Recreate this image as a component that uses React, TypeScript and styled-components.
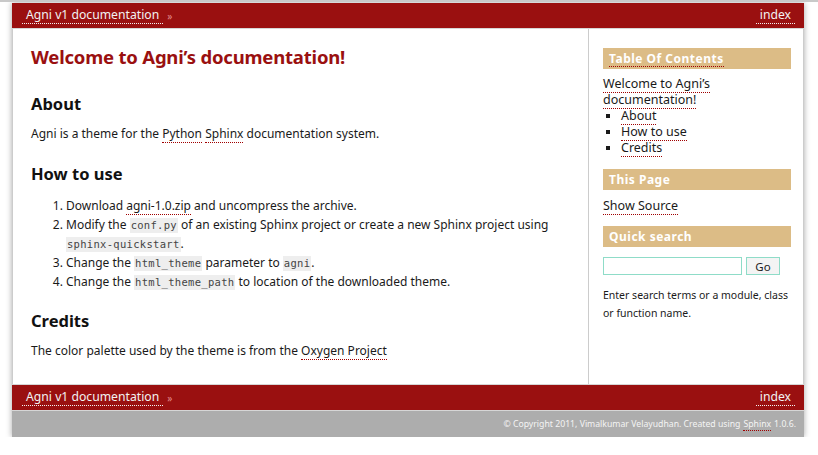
import styled, { createGlobalStyle } from 'styled-components';

const GlobalStyle = createGlobalStyle`
    html, body {
        margin: 0;
        background: #ffffff;
    }
    body {
        border-top: 2px solid #c9c9c9;
        padding-top: 1px;
        font-family: 'Noto Sans', 'DejaVu Sans', sans-serif;
        color: #1a1a1a;
    }
`;

const Page = styled.div({
    width: '792px',
    marginLeft: '12px',
    boxShadow: '0 0 6px rgba(0, 0, 0, 0.35)',
    background: '#ffffff'
});

const RelBar = styled.div<{ $top?: boolean }>((props) => ({
    height: '25px',
    display: 'flex',
    alignItems: 'center',
    justifyContent: 'space-between',
    padding: '0 9px 0 10px',
    background: '#9a1010',
    borderTop: props.$top ? 'none' : '1px solid #d6d6d6',
    borderBottom: '1px solid #d6d6d6'
}));

const BarLeft = styled.div({
    display: 'flex',
    alignItems: 'center',
    gap: '4px'
});

const BarLink = styled.a({
    color: '#f2f2f2',
    fontSize: '12.2px',
    lineHeight: '16px',
    padding: '0 4px',
    textDecoration: 'none',
    borderBottom: '1px dotted #f2f2f2'
});

const Raquo = styled.span({
    color: '#e08a8a',
    fontSize: '10px'
});

const Body = styled.div({
    display: 'flex',
    minHeight: '355px',
    borderLeft: '1px solid #cccccc',
    borderRight: '1px solid #cccccc'
});

const Main = styled.div({
    flex: 1,
    padding: '15px 20px 0 18px'
});

const Title = styled.h1({
    margin: 0,
    fontSize: '18.5px',
    lineHeight: '26px',
    fontWeight: 700,
    letterSpacing: '-0.2px',
    color: '#9a1010'
});

const SectionTitle = styled.h2<{ $gap: number }>((props) => ({
    margin: props.$gap + 'px 0 9px',
    fontSize: '16.5px',
    lineHeight: '22px',
    fontWeight: 700,
    color: '#111111'
}));

const Para = styled.p({
    margin: 0,
    fontSize: '12px',
    lineHeight: '19px'
});

const Steps = styled.ol({
    margin: 0,
    padding: '2px 0 0 35px',
    fontSize: '12px',
    lineHeight: '19px'
});

const Link = styled.a({
    color: '#1a1a1a',
    textDecoration: 'none',
    borderBottom: '1px dotted #a00000'
});

const Code = styled.code({
    fontFamily: "'DejaVu Sans Mono', monospace",
    fontSize: '10.5px',
    lineHeight: '12px',
    display: 'inline-block',
    color: '#444444',
    background: '#eeeeee',
    padding: '1px 1px 2px',
    letterSpacing: '0.3px'
});

const Sidebar = styled.div({
    width: '188px',
    padding: '19px 12px 0 14px',
    borderLeft: '1px solid #cccccc'
});

const BoxTitle = styled.h3<{ $gap: number }>((props) => ({
    margin: props.$gap + 'px 0 0',
    height: '21px',
    display: 'flex',
    alignItems: 'center',
    padding: '0 6px',
    background: '#dcbc86',
    color: '#ffffff',
    fontSize: '12px',
    fontWeight: 700,
    letterSpacing: '0.5px'
}));

const TitleLink = styled.span({
    lineHeight: '15px',
    borderBottom: '1px dotted #a00000'
});

const SideText = styled.div<{ $gap: number }>((props) => ({
    marginTop: props.$gap + 'px',
    fontSize: '12.5px',
    lineHeight: '16px'
}));

const SideList = styled.ul({
    margin: 0,
    paddingLeft: '18px',
    listStyle: 'square'
});

const SearchRow = styled.form({
    display: 'flex',
    gap: '4px',
    marginTop: '10px'
});

const SearchInput = styled.input({
    width: '139px',
    height: '18px',
    boxSizing: 'border-box',
    border: '1px solid #8fdcc8',
    padding: '0 3px'
});

const GoButton = styled.button({
    width: '34px',
    height: '18px',
    boxSizing: 'border-box',
    border: '1px solid #8fdcc8',
    background: '#f4f4f4',
    fontFamily: "'Noto Sans', sans-serif",
    fontSize: '11.5px',
    color: '#222222',
    padding: 0
});

const Help = styled.p({
    margin: '11px 0 0',
    fontSize: '10.5px',
    lineHeight: '18px'
});

const Footer = styled.div({
    height: '26px',
    display: 'flex',
    alignItems: 'center',
    justifyContent: 'flex-end',
    padding: '0 8px',
    background: '#adadad',
    color: '#f4f4f4',
    fontSize: '8.7px'
});

const FooterLink = styled.a({
    color: '#f4f4f4',
    textDecoration: 'none',
    borderBottom: '1px dotted #a00000',
    margin: '0 3px'
});

function Bar({ top }: { top?: boolean }) {
    return (
        <RelBar $top={top}>
            <BarLeft>
                <BarLink href="#">Agni v1 documentation</BarLink>
                <Raquo>»</Raquo>
            </BarLeft>
            <BarLink href="#">index</BarLink>
        </RelBar>
    );
}

export default function App() {
    return (
        <>
            <GlobalStyle />
            <Page>
                <Bar top />
                <Body>
                    <Main>
                        <Title>Welcome to Agni’s documentation!</Title>
                        <SectionTitle $gap={23}>About</SectionTitle>
                        <Para>
                            Agni is a theme for the <Link href="#">Python</Link>{' '}
                            <Link href="#">Sphinx</Link> documentation system.
                        </Para>
                        <SectionTitle $gap={20}>How to use</SectionTitle>
                        <Steps>
                            <li>
                                Download <Link href="#">agni-1.0.zip</Link> and uncompress the
                                archive.
                            </li>
                            <li>
                                Modify the <Code>conf.py</Code> of an existing Sphinx project or
                                create a new Sphinx project using <Code>sphinx-quickstart</Code>.
                            </li>
                            <li>
                                Change the <Code>html_theme</Code> parameter to <Code>agni</Code>.
                            </li>
                            <li>
                                Change the <Code>html_theme_path</Code> to location of the
                                downloaded theme.
                            </li>
                        </Steps>
                        <SectionTitle $gap={19}>Credits</SectionTitle>
                        <Para>
                            The color palette used by the theme is from the{' '}
                            <Link href="#">Oxygen Project</Link>
                        </Para>
                    </Main>
                    <Sidebar>
                        <BoxTitle $gap={0}>
                            <TitleLink>Table Of Contents</TitleLink>
                        </BoxTitle>
                        <SideText $gap={7}>
                            <Link href="#">Welcome to Agni’s documentation!</Link>
                            <SideList>
                                <li>
                                    <Link href="#">About</Link>
                                </li>
                                <li>
                                    <Link href="#">How to use</Link>
                                </li>
                                <li>
                                    <Link href="#">Credits</Link>
                                </li>
                            </SideList>
                        </SideText>
                        <BoxTitle $gap={13}>This Page</BoxTitle>
                        <SideText $gap={8}>
                            <Link href="#">Show Source</Link>
                        </SideText>
                        <BoxTitle $gap={12}>Quick search</BoxTitle>
                        <SearchRow onSubmit={(e) => e.preventDefault()}>
                            <SearchInput type="text" />
                            <GoButton type="submit">Go</GoButton>
                        </SearchRow>
                        <Help>Enter search terms or a module, class or function name.</Help>
                    </Sidebar>
                </Body>
                <Bar />
                <Footer>
                    © Copyright 2011, Vimalkumar Velayudhan. Created using
                    <FooterLink href="#">Sphinx</FooterLink>1.0.6.
                </Footer>
            </Page>
        </>
    );
}
